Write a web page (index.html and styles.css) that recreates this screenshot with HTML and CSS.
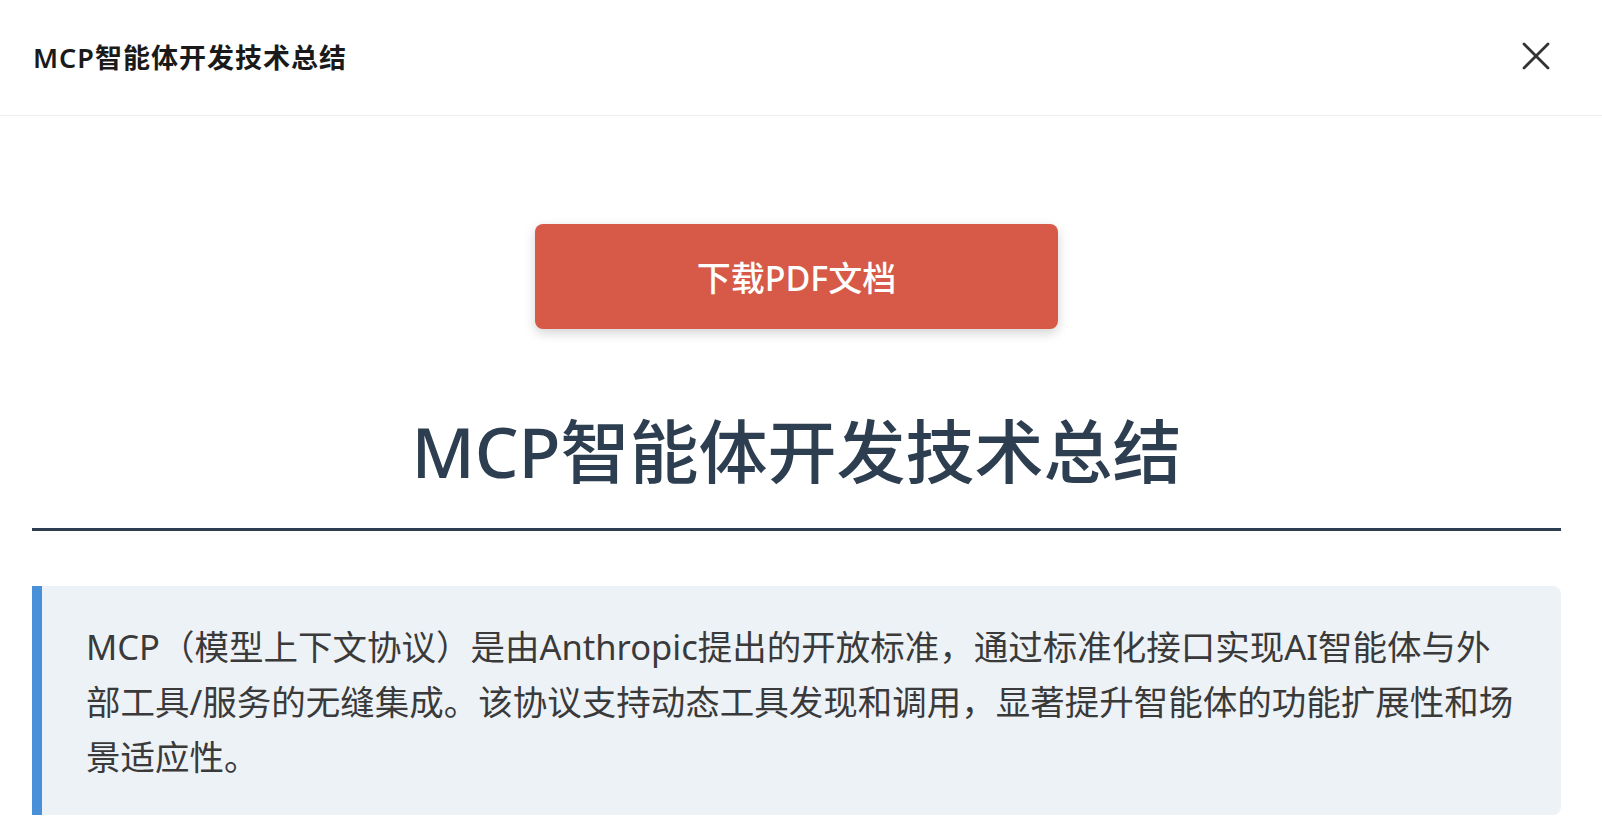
FILE: index.html
```html
<!DOCTYPE html>
<html lang="zh-CN">
<head>
    <meta charset="UTF-8" />
    <meta name="viewport" content="width=device-width, initial-scale=1.0" />
    <title>MCP智能体开发技术总结</title>
    <link rel="stylesheet" href="styles.css">
</head>
<body>
    <header class="modal-header">
        <h2 class="modal-title">MCP智能体开发技术总结</h2>
        <button class="close-btn" title="关闭">
            <svg width="28" height="28" viewBox="0 0 28 28">
                <path d="M2 2 L26 26 M26 2 L2 26" stroke="#333" stroke-width="2.8" stroke-linecap="round" fill="none" />
            </svg>
        </button>
    </header>
    <main class="modal-body">
        <button class="download-btn">下载PDF文档</button>
        <h1 class="doc-title">MCP智能体开发技术总结</h1>
        <div class="summary-box">
            MCP（模型上下文协议）是由Anthropic提出的开放标准，通过标准化接口实现AI智能体与外部工具/服务的无缝集成。该协议支持动态工具发现和调用，显著提升智能体的功能扩展性和场景适应性。
        </div>
    </main>
</body>
</html>
```

FILE: styles.css
```css
/* Reset and general styles */
* {
    box-sizing: border-box;
}
body {
    margin: 0;
    padding: 0;
    background-color: white;
    font-family: "Noto Sans", "Noto Sans CJK SC", sans-serif;
    color: #333;
    overflow: hidden;
}

/* Header */
.modal-header {
    height: 116px;
    padding: 0 52px 3px 33px;
    display: flex;
    justify-content: space-between;
    align-items: center;
    border-bottom: 1px solid #eeeeee;
}
.modal-title {
    margin: 0;
    font-size: 27px;
    font-weight: 600;
    letter-spacing: 1px;
    color: #1a1a1a;
}
.close-btn {
    background: none;
    border: none;
    padding: 0;
    width: 28px;
    height: 28px;
    cursor: pointer;
}

/* Body */
.modal-body {
    padding: 108px 41px 0 32px;
    display: flex;
    flex-direction: column;
    align-items: center;
}
.download-btn {
    width: 523px;
    height: 105px;
    border: none;
    border-radius: 8px;
    background-color: #d65a47;
    color: white;
    font-family: inherit;
    font-size: 34px;
    font-weight: 500;
    box-shadow: 0 4px 12px rgba(0, 0, 0, 0.18);
    cursor: pointer;
}
.doc-title {
    align-self: stretch;
    margin: 80px 0 0;
    padding-bottom: 35px;
    text-align: center;
    font-size: 69px;
    line-height: 84px;
    font-weight: 500;
    color: #2c3e50;
    border-bottom: 3px solid #2c3e50;
}
.summary-box {
    align-self: stretch;
    margin-top: 55px;
    padding: 33px 44px 31px 44px;
    background-color: #edf2f7;
    border-left: 10px solid #4a90d9;
    border-radius: 0 8px 8px 0;
    font-size: 34.5px;
    line-height: 55px;
    color: #3a3a3a;
}
```
